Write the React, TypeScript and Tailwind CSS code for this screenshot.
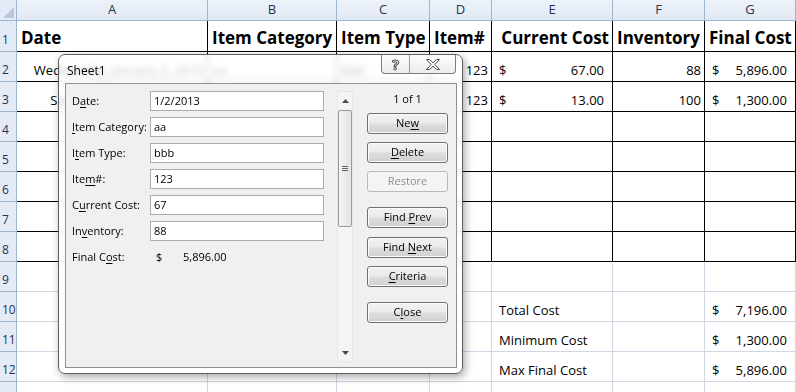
import React from 'react';

type Cell = { t?: string; k?: 'l' | 'lt' | 'r' | 'm' };

const alignCls: Record<string, string> = {
  l: 'justify-start pl-[4px]',
  lt: 'justify-start pl-[7px]',
  r: 'justify-end pr-[3px]',
  m: 'justify-between pl-[7px] pr-[8px]',
};

const headerRow: Cell[] = [
  { t: 'Date', k: 'l' },
  { t: 'Item Category', k: 'l' },
  { t: 'Item Type', k: 'l' },
  { t: 'Item#', k: 'l' },
  { t: 'Current Cost', k: 'r' },
  { t: 'Inventory', k: 'l' },
  { t: 'Final Cost', k: 'l' },
];

const empty: Cell[] = [{}, {}, {}, {}, {}, {}, {}];

const dataRows: Cell[][] = [
  [
    { t: 'Wednesday, January 2, 2013', k: 'r' },
    { t: 'aa', k: 'l' },
    { t: 'bbb', k: 'l' },
    { t: '123', k: 'r' },
    { t: '67.00', k: 'm' },
    { t: '88', k: 'r' },
    { t: '5,896.00', k: 'm' },
  ],
  [
    { t: 'Saturday, January 5, 2013', k: 'r' },
    {},
    {},
    { t: '123', k: 'r' },
    { t: '13.00', k: 'm' },
    { t: '100', k: 'r' },
    { t: '1,300.00', k: 'm' },
  ],
  empty, empty, empty, empty, empty, empty,
  [{}, {}, {}, {}, { t: 'Total Cost', k: 'lt' }, {}, { t: '7,196.00', k: 'm' }],
  [{}, {}, {}, {}, { t: 'Minimum Cost', k: 'lt' }, {}, { t: '1,300.00', k: 'm' }],
  [{}, {}, {}, {}, { t: 'Max Final Cost', k: 'lt' }, {}, { t: '5,896.00', k: 'm' }],
  empty,
];

function CellView({ cell, dark, bold }: { cell: Cell; dark: boolean; bold?: boolean }) {
  return (
    <div
      className={`flex items-end overflow-hidden whitespace-nowrap border-r border-b pb-[1px] text-black ${
        dark ? 'border-black' : 'border-[#d0d7e5]'
      } ${bold ? 'text-[17px] font-bold' : 'text-[13px]'} ${cell.k ? alignCls[cell.k] : ''}`}
    >
      {cell.k === 'm' ? (
        <>
          <span>$</span>
          <span>{cell.t}</span>
        </>
      ) : (
        cell.t
      )}
    </div>
  );
}

function RowNum({ n }: { n?: number }) {
  return (
    <div className="flex items-end pb-[2px] pl-[2px] text-[12px] text-[#1f3450] bg-[#e4ebf6] border-r border-b border-[#9eb6ce]">
      {n}
    </div>
  );
}

function Field({ label, value }: { label: [string, string, string]; value: string }) {
  return (
    <div className="flex h-[20px] items-center">
      <span className="w-[78px]">
        {label[0]}
        <span className="underline underline-offset-[2px]">{label[1]}</span>
        {label[2]}
      </span>
      <div className="flex h-[20px] w-[174px] items-center border border-[#a9adb3] bg-white pl-[3px]">{value}</div>
    </div>
  );
}

function Btn({ pre, u, post, mt, disabled }: { pre: string; u: string; post: string; mt: string; disabled?: boolean }) {
  return (
    <div
      className={`${mt} flex h-[21px] w-[81px] items-center justify-center rounded-[3px] border ${
        disabled
          ? 'border-[#b7bbbe] bg-[#f4f4f4] text-[#8d8d8d]'
          : 'border-[#707070] bg-[linear-gradient(#f2f2f2,#ebebeb_45%,#dddddd_55%,#cfcfcf)] shadow-[inset_0_0_0_1px_#fbfbfb] text-black'
      }`}
    >
      <span className="whitespace-pre">
        {pre}
        {disabled ? u : <span className="underline underline-offset-[2px]">{u}</span>}
        {post}
      </span>
    </div>
  );
}

export default function App() {
  return (
    <div className="relative h-[392px] w-[796px] overflow-hidden bg-white font-['Open_Sans',sans-serif]">
      {/* sheet grid */}
      <div className="grid grid-cols-[17px_191px_129px_93px_62px_121px_92px_91px] grid-rows-[21px_31px_repeat(12,30px)]">
        <div className="relative bg-[#e4ebf6] border-r border-b border-[#9eb6ce]">
          <svg className="absolute bottom-[2px] right-[2px]" width="11" height="11" viewBox="0 0 11 11">
            <polygon points="11,0 11,11 0,11" fill="#b8c7da" />
          </svg>
        </div>
        {['A', 'B', 'C', 'D', 'E', 'F', 'G'].map((c) => (
          <div
            key={c}
            className="flex items-center justify-center bg-[linear-gradient(#edf2f9,#e1e9f4)] border-r border-b border-[#9eb6ce] text-[13px] text-[#1f3450]"
          >
            {c}
          </div>
        ))}

        <RowNum n={1} />
        {headerRow.map((c, i) => (
          <CellView key={i} cell={c} dark bold />
        ))}

        {dataRows.map((row, ri) => {
          const r = ri + 2;
          return (
            <React.Fragment key={r}>
              <RowNum n={r <= 12 ? r : undefined} />
              {row.map((c, ci) => (
                <CellView key={ci} cell={c} dark={r <= 8} />
              ))}
            </React.Fragment>
          );
        })}
      </div>

      {/* data form dialog */}
      <div className="absolute left-[58px] top-[54px] flex h-[320px] w-[405px] flex-col rounded-[7px] border border-[#5f5f5f] bg-white/75 backdrop-blur-[3px] shadow-[2px_3px_8px_rgba(0,0,0,0.35)] text-[11px] text-black">
        <div className="flex h-[28px] items-center pl-[8px] pt-[4px] text-[12px]">Sheet1</div>
        <div className="absolute right-[6px] top-0 flex h-[19px] overflow-hidden rounded-b-[4px] border border-t-0 border-[#7d7d7d] bg-[linear-gradient(#fdfdfd,#ececec)]">
          <div className="flex w-[28px] items-center justify-center border-r border-[#9a9a9a] text-[14px] font-bold text-white [-webkit-text-stroke:1px_#505050]">
            ?
          </div>
          <div className="flex w-[45px] items-center justify-center">
            <svg width="14" height="11" viewBox="0 0 14 11">
              <polygon
                points="0.5,0.5 3.5,0.5 7,3.8 10.5,0.5 13.5,0.5 8.8,5.5 13.5,10.5 10.5,10.5 7,7.2 3.5,10.5 0.5,10.5 5.2,5.5"
                fill="#ffffff"
                stroke="#505050"
                strokeWidth="1"
              />
            </svg>
          </div>
        </div>

        <div className="mx-[6px] mr-[5px] mb-[5px] flex flex-1 border border-[#8e8f8f] bg-[#f0f0f0]">
          <div className="flex w-[258px] flex-col gap-[6px] pl-[6px] pt-[7px]">
            <Field label={['D', 'a', 'te:']} value="1/2/2013" />
            <Field label={['', 'I', 'tem Category:']} value="aa" />
            <Field label={['I', 't', 'em Type:']} value="bbb" />
            <Field label={['Ite', 'm', '#:']} value="123" />
            <Field label={['C', 'u', 'rrent Cost:']} value="67" />
            <Field label={['In', 'v', 'entory:']} value="88" />
            <div className="flex h-[20px] items-center">
              <span className="w-[78px]">
                Final C<span className="underline underline-offset-[2px]">o</span>st:
              </span>
              <span className="w-[33px] pl-[6px]">$</span>
              <span>5,896.00</span>
            </div>
          </div>

          {/* scrollbar */}
          <div className="ml-[13px] mt-[7px] flex h-[271px] w-[16px] flex-col border border-[#e6e6e6] bg-[#f4f4f4]">
            <div className="flex h-[17px] items-center justify-center">
              <svg width="7" height="4" viewBox="0 0 7 4">
                <polygon points="3.5,0 7,4 0,4" fill="#4a4a4a" />
              </svg>
            </div>
            <div className="mt-[1px] flex h-[117px] items-center justify-center rounded-[2px] border border-[#9b9b9b] bg-[linear-gradient(90deg,#f4f4f4,#e2e2e2)]">
              <div className="flex flex-col gap-[1px]">
                <div className="h-[1px] w-[6px] bg-[#606060]" />
                <div className="h-[1px] w-[6px] bg-[#606060]" />
                <div className="h-[1px] w-[6px] bg-[#606060]" />
              </div>
            </div>
            <div className="flex-1" />
            <div className="flex h-[17px] items-center justify-center">
              <svg width="7" height="4" viewBox="0 0 7 4">
                <polygon points="0,0 7,0 3.5,4" fill="#4a4a4a" />
              </svg>
            </div>
          </div>

          {/* buttons */}
          <div className="ml-[14px] flex w-[81px] flex-col">
            <div className="mt-[7px] flex h-[16px] items-center justify-center">1 of 1</div>
            <Btn mt="mt-[6px]" pre="Ne" u="w" post="" />
            <Btn mt="mt-[8px]" pre="" u="D" post="elete" />
            <Btn mt="mt-[8px]" pre="" u="R" post="estore" disabled />
            <Btn mt="mt-[15px]" pre="Find " u="P" post="rev" />
            <Btn mt="mt-[9px]" pre="Find " u="N" post="ext" />
            <Btn mt="mt-[8px]" pre="" u="C" post="riteria" />
            <Btn mt="mt-[15px]" pre="C" u="l" post="ose" />
          </div>
        </div>
      </div>
    </div>
  );
}
